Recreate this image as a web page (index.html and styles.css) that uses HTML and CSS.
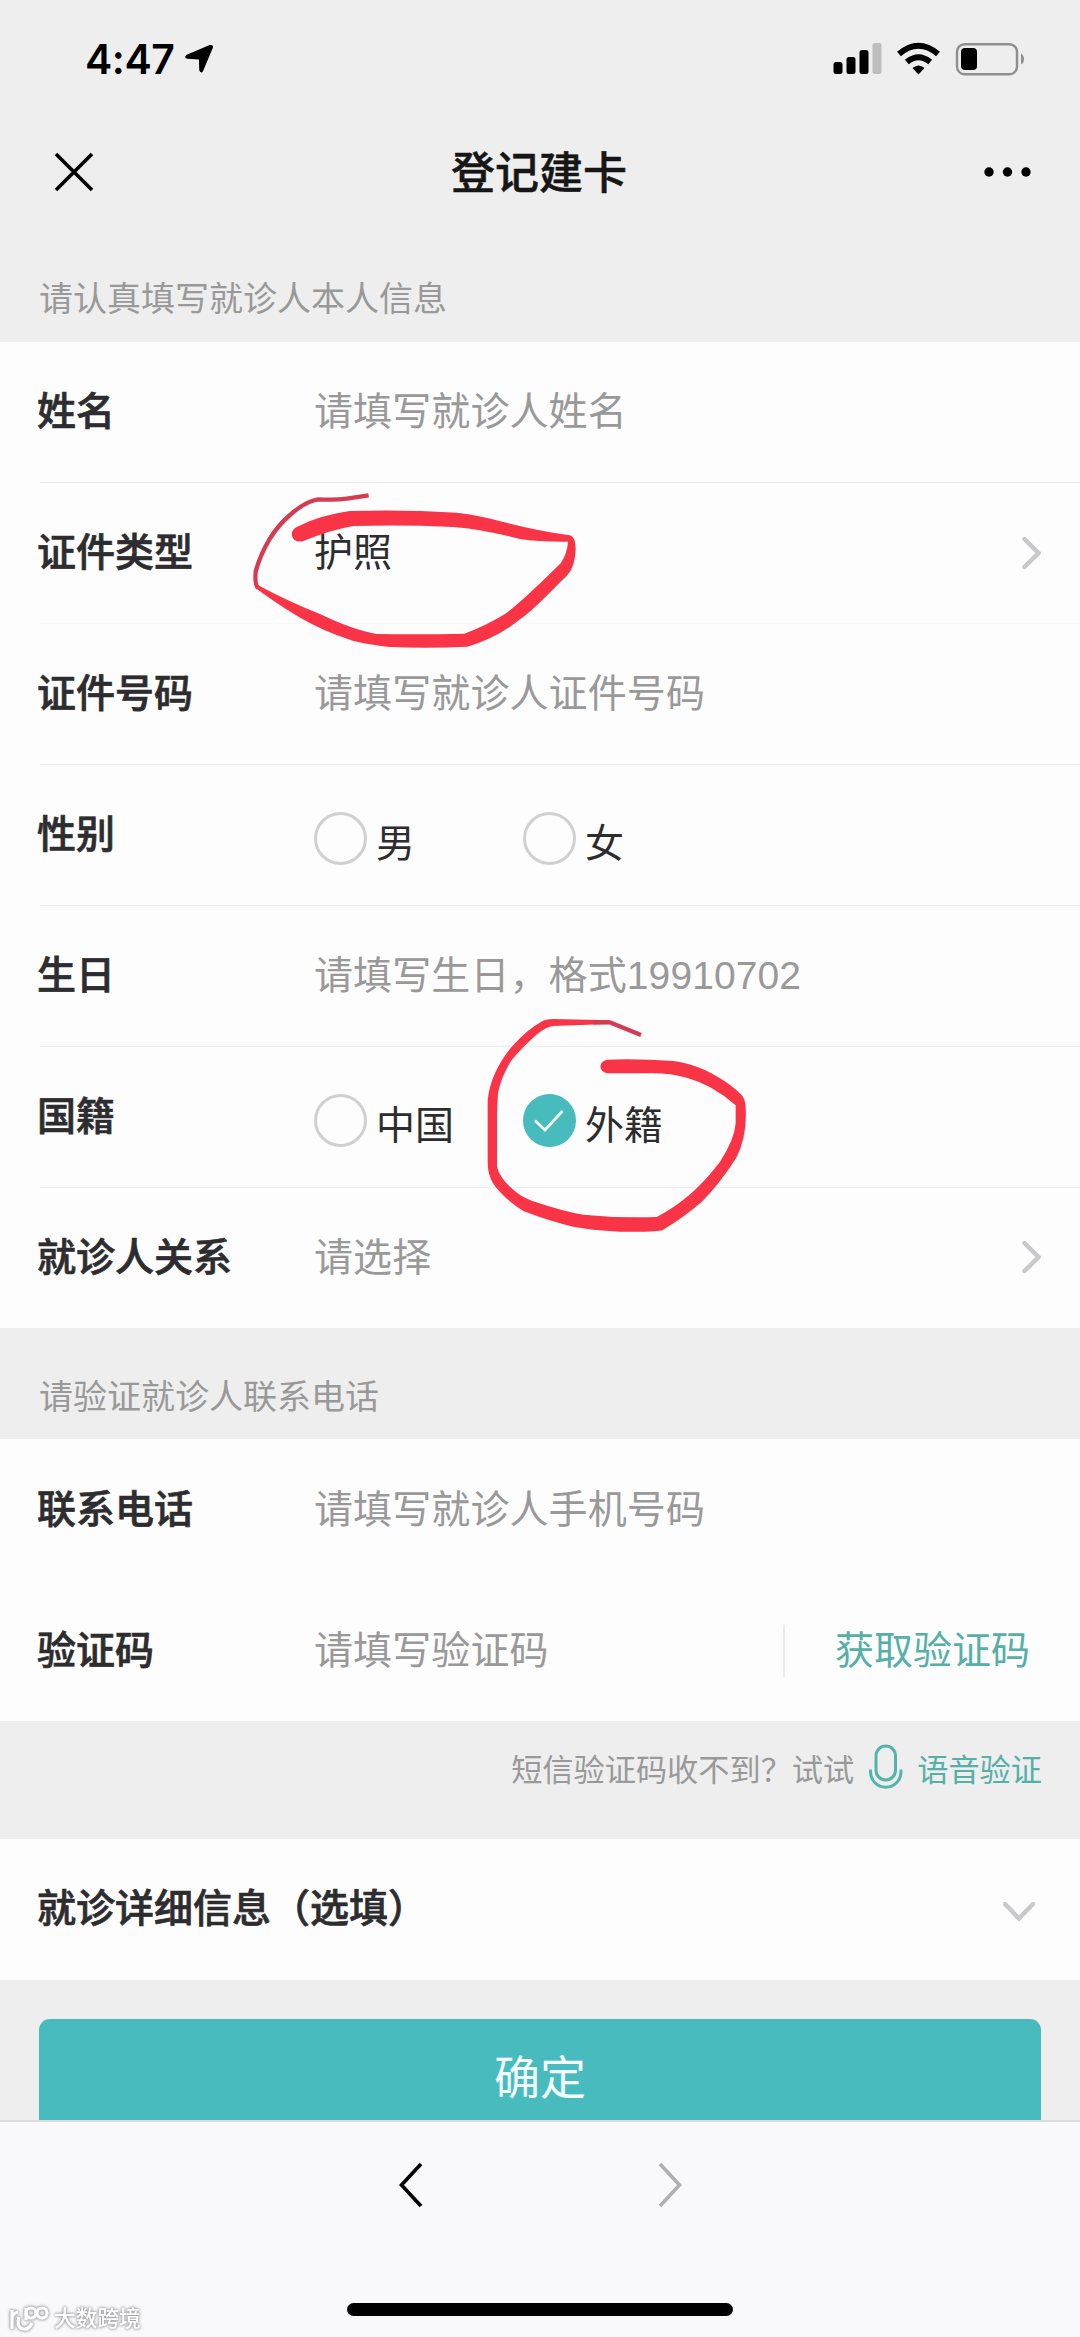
FILE: index.html
```html
<!DOCTYPE html>
<html lang="zh-CN">
<head>
<meta charset="utf-8">
<title>登记建卡</title>
<link rel="stylesheet" href="styles.css">
</head>
<body>
<div class="screen">
  <header class="top">
    <div class="status">
      <span class="time">4:47</span>
      <svg class="loc" width="30" height="30" viewBox="0 0 30 30"><path stroke="#000" stroke-width="1.500" stroke-linejoin="round" d="M26 1.800 Q29 1 28 4 L18.500 26.500 Q17 29 16 26 L15.700 15.500 Q15.700 14.700 14.800 14.700 L3.500 14 Q0.500 13.500 3 11.500 Z"/></svg>
      <svg class="indicators" width="192" height="34" viewBox="0 0 192 34">
        <rect x="0.500" y="20" width="9" height="12" rx="2.500"/><rect x="13.500" y="15" width="9" height="17" rx="2.500"/><rect x="26.500" y="8" width="9" height="24" rx="2.500"/><rect x="39.500" y="1" width="9" height="31" rx="2.500" fill="#bdbdbd"/>
        <g fill="none" stroke="#000" stroke-width="6"><path d="M66 12 Q85.500 -4.500 105 12"/><path d="M73.800 20 Q85.500 10.500 97.200 20"/></g>
        <path d="M79.500 26 Q85.500 21 91.500 26 L85.500 32.500 Z"/>
        <rect x="124" y="2.200" width="60" height="30" rx="7.500" fill="none" stroke="#8f8f8f" stroke-width="2.400"/>
        <rect x="128" y="6" width="16" height="22" rx="4"/><path d="M188 11.500 Q191 13 191 17 Q191 21 188 22.500 Z" fill="#8f8f8f"/>
      </svg>
    </div>
    <div class="nav">
      <svg width="40" height="40" viewBox="0 0 40 40"><path d="M2 2 L38 38 M38 2 L2 38" stroke="#000" stroke-width="3.600"/></svg>
      <h1>登记建卡</h1>
      <svg width="48" height="12" viewBox="0 0 48 12"><circle cx="5" cy="6" r="4.700"/><circle cx="23.500" cy="6" r="4.700"/><circle cx="42" cy="6" r="4.700"/></svg>
    </div>
    <p class="note">请认真填写就诊人本人信息</p>
  </header>

  <main>
    <section class="group">
      <div class="row"><b>姓名</b><span class="hint">请填写就诊人姓名</span></div>
      <div class="row faint"><b>证件类型</b><span>护照</span><svg class="chev" width="19" height="32" viewBox="0 0 19 32"><path d="M2.500 2 L16.500 16 L2.500 30"/></svg></div>
      <div class="row"><b>证件号码</b><span class="hint">请填写就诊人证件号码</span></div>
      <div class="row"><b>性别</b><div class="options"><label><i class="radio"></i>男</label><label><i class="radio"></i>女</label></div></div>
      <div class="row"><b>生日</b><span class="hint">请填写生日，格式19910702</span></div>
      <div class="row"><b>国籍</b><div class="options"><label><i class="radio"></i>中国</label><label><i class="radio on"><svg width="52" height="52" viewBox="0 0 52 52"><path d="M12 26.500 L22 36 L39.500 17" fill="none" stroke="#f2fffe" stroke-width="2.800"/></svg></i>外籍</label></div></div>
      <div class="row last"><b>就诊人关系</b><span class="hint">请选择</span><svg class="chev" width="19" height="32" viewBox="0 0 19 32"><path d="M2.500 2 L16.500 16 L2.500 30"/></svg></div>
    </section>

    <p class="note second">请验证就诊人联系电话</p>

    <section class="group phone">
      <div class="row last"><b>联系电话</b><span class="hint">请填写就诊人手机号码</span></div>
      <div class="row last"><b>验证码</b><span class="hint">请填写验证码</span><a class="getcode">获取验证码</a></div>
    </section>

    <div class="voice">
      <span>短信验证码收不到？试试</span>
      <svg width="36" height="46" viewBox="0 0 36 46"><g fill="none" stroke="#55b3ab" stroke-width="3"><rect x="8" y="2" width="19.500" height="34" rx="9.750"/><path d="M2.500 25.500 V28 A15.250 15.250 0 0 0 33 28 V25.500"/></g></svg>
      <a>语音验证</a>
    </div>

    <section class="group">
      <div class="row last"><b>就诊详细信息（选填）</b><svg class="chev down" width="32" height="20" viewBox="0 0 32 20"><path d="M2 2 L16 16.500 L30 2"/></svg></div>
    </section>

    <div class="submit"><button>确定</button></div>
  </main>

  <footer class="toolbar">
    <div class="arrows">
      <svg width="26" height="46" viewBox="0 0 26 46"><path d="M23 2 L3.500 23 L23 44" fill="none" stroke="#000" stroke-width="3.600"/></svg>
      <svg width="26" height="46" viewBox="0 0 26 46"><path d="M3 2 L22.500 23 L3 44" fill="none" stroke="#b0b0b2" stroke-width="3.600"/></svg>
    </div>
    <div class="home"></div>
    <div class="brand">
      <svg width="40" height="28" viewBox="0 0 40 28"><g fill="none" stroke="#fff" stroke-width="3.200"><path d="M3 5 V24 M3 13 Q4 8 9 7 M10 12 Q7 22 14 24 Q20 25 23 18"/><circle cx="22" cy="8" r="5"/><circle cx="33" cy="8" r="5"/><path d="M17 3 V15"/></g></svg>
      <span>大数跨境</span>
    </div>
  </footer>

  <svg class="mark mark-type" width="400" height="200" viewBox="0 0 1200 600">
    <path fill="#f93446" d="M232 170 Q300 135 390 123 Q550 118 710 128 Q780 136 850 156 Q960 184 1050 196 Q1067 202 1067 236 Q1066 290 1040 318 C990 365 950 412 900 448 Q830 505 742 530 Q630 536 510 531 Q420 520 390 509 C280 475 190 415 106 354 L112 344 Q200 392 300 432 Q400 480 470 492 Q600 494 733 491 Q800 466 855 432 C900 400 960 340 1022 280 Q1042 250 1044 215 Q960 216 900 207 Q790 178 700 171 Q550 164 400 168 Q330 180 248 214 Q220 218 215 194 Q216 176 232 170 Z"/>
    <path fill="none" stroke="#d53c51" stroke-width="13" stroke-linejoin="round" d="M114 353 Q104 346 107 305 Q120 255 150 205 Q175 165 210 135 Q255 94 295 88 Q345 91 380 86 L446 76"/>
  </svg>
  <svg class="mark mark-nation" width="320" height="300" viewBox="0 0 960 900">
    <path fill="#f93446" d="M441 239 Q540 236 640 243 C720 252 800 300 845 345 Q857 360 857 385 Q862 470 828 535 Q780 610 727 664 Q670 714 608 750 Q590 757 480 755 Q390 750 340 740 Q270 724 190 693 Q130 655 98 608 Q84 585 83 550 V360 Q87 320 104 282 Q128 228 165 190 Q200 150 244 125 Q256 117 280 117 L448 121 L450 132 Q360 135 280 138 Q260 140 232 162 Q188 200 155 240 Q123 290 114 340 L111 400 V560 Q118 590 151 621 Q180 650 215 662 Q310 694 370 704 Q480 715 590 711 C660 672 710 635 780 545 Q823 480 827 430 V376 Q760 315 680 293 Q630 280 580 280 H441 Q422 275 421 259 Q423 243 441 239 Z"/>
    <path fill="none" stroke="#d53c51" stroke-width="13" stroke-linejoin="round" d="M400 127 L449 127 L543 165"/>
  </svg>
</div>
</body>
</html>
```

FILE: styles.css
```css
* { box-sizing: border-box; margin: 0; padding: 0; }

body {
  width: 1080px;
  background: #eee;
  color: #2d2d2f;
  font: 39px/56px "Liberation Sans", "Noto Sans CJK SC", sans-serif;
}

.screen {
  position: relative;
  display: flex;
  flex-direction: column;
  height: 2337px;
  overflow: hidden;
}

svg { display: block; flex: none; }

.top { height: 342px; }
.status {
  display: flex;
  align-items: center;
  height: 118px;
  padding: 0 55px 0 85px;
}
.time { font: 600 41px/60px Inter, sans-serif; color: #000; width: 90px; letter-spacing: -0.5px; }
.loc { margin-left: 9px; }
.indicators { margin-left: auto; }

.nav {
  display: flex;
  align-items: center;
  justify-content: space-between;
  height: 108px;
  padding: 0 48px 0 54px;
}
.nav h1 { padding-top: 3px; font-size: 44px; font-weight: 500; color: #161616; -webkit-text-stroke: 0.5px; }

.note {
  height: 116px;
  padding: 45px 39px 0;
  color: #999;
  font-size: 34px;
}
.note.second { height: 111px; padding-top: 41px; }

.group { background: #fefdfe; }
.row {
  position: relative;
  display: flex;
  align-items: center;
  height: 141px;
  padding: 0 39px 1px 37px;
}
.row::after {
  content: "";
  position: absolute;
  left: 40px;
  right: 0;
  bottom: 0;
  height: 1px;
  background: #ececee;
}
.row.faint::after { background: #f8f8f9; }
.row.last::after { display: none; }
.row.last:nth-child(7) { height: 140px; }
.row b { min-width: 277px; font-weight: 500; white-space: nowrap; -webkit-text-stroke: 0.7px; }
.phone .row { padding-bottom: 0; }
.hint { color: #999; letter-spacing: 0.100px; }
.chev { margin-left: auto; margin-top: -1px; fill: none; stroke: #c9c9cb; stroke-width: 4.500; stroke-linecap: round; }
.chev.down { margin: 5px 6px 0 auto; }

.options { display: flex; padding-top: 8px; }
.options label { display: flex; align-items: center; width: 209px; gap: 9px; line-height: 70px; padding-top: 9px; }
.radio {
  width: 53px;
  height: 53px;
  margin-top: -10px;
  border: 3px solid #d1cfd1;
  border-radius: 50%;
}
.radio.on { border: 0; background: #48bbbc; }

.getcode {
  display: flex;
  align-items: center;
  height: 52px;
  margin-left: auto;
  padding: 0 11px 0 50px;
  border-left: 2px solid #ececf0;
  color: #55b0a8;
}

.voice {
  display: flex;
  justify-content: flex-end;
  height: 118px;
  padding: 23px 38px 0 0;
  color: #999;
  font-size: 31.200px;
  line-height: 54px;
}
.voice svg { margin: 0 13px 0 14px; }
.voice a { color: #55b0a8; }

.submit { height: 140px; padding: 39px 39px 0; }
.submit button {
  display: block;
  width: 100%;
  height: 101px;
  border: 0;
  border-radius: 11px 11px 0 0;
  background: #48bbbe;
  color: #f4ffff;
  font: 46px/101px "Liberation Sans", "Noto Sans CJK SC", sans-serif;
  padding-top: 18px;
  line-height: 83px;
}

.toolbar {
  position: relative;
  flex: 1;
  padding-top: 40px;
  border-top: 2px solid #dcdcde;
  background: #f9f8fb;
}
.arrows { display: flex; justify-content: center; gap: 233px; }
.home { width: 386px; height: 13px; margin: 95px auto 0; border-radius: 7px; background: #000; }
.brand {
  position: absolute;
  left: 9px;
  bottom: 4px;
  display: flex;
  align-items: center;
  gap: 5px;
  color: #fff;
  font-size: 21.700px;
  font-weight: 500;
  line-height: 28px;
  filter: drop-shadow(0 0 1.500px #9c9ca0) drop-shadow(0 0 1px #b5b5b8);
}

/* Hand-drawn circles lie over the form */
.mark { position: absolute; pointer-events: none; }
.mark-type { left: 220px; top: 470px; }
.mark-nation { left: 460px; top: 980px; }
```
